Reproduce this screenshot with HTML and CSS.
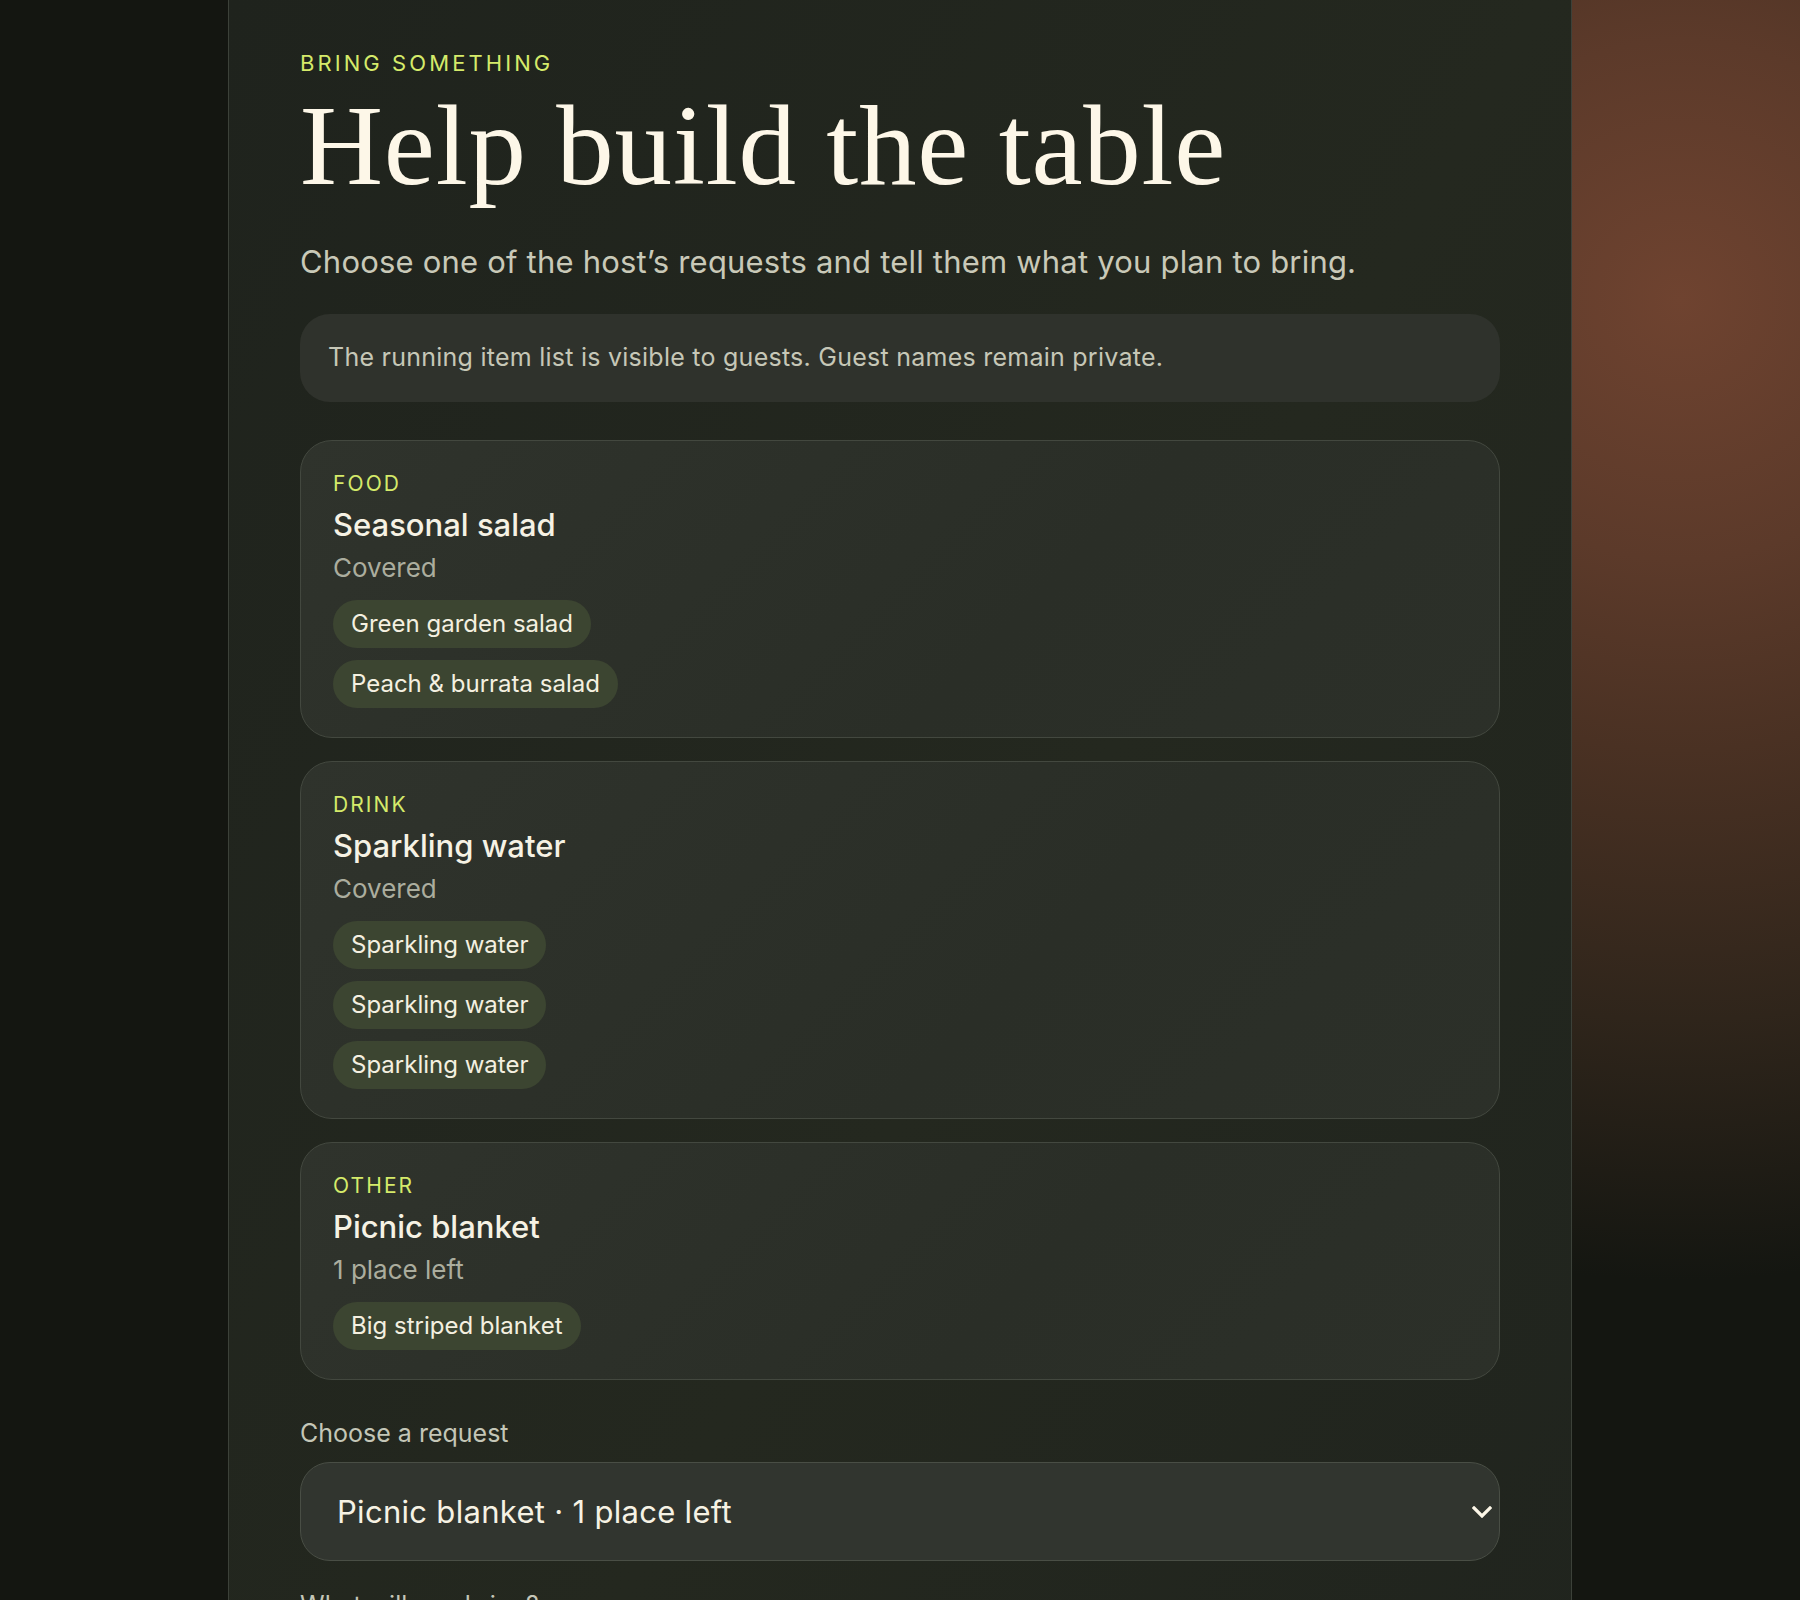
FILE: index.html
```html
<!DOCTYPE html>
<html lang="en">

<head>
    <meta charset="UTF-8">
    <meta name="viewport" content="width=device-width, initial-scale=1.0">
    <title>Bring something</title>
    <link rel="stylesheet" href="styles.css">
</head>

<body>
    <main class="sheet">
        <p class="eyebrow">Bring something</p>
        <h1 class="title">Help build the table</h1>
        <p class="lead">Choose one of the host’s requests and tell them what you plan to bring.</p>
        <div class="notice">The running item list is visible to guests. Guest names remain private.</div>

        <section class="requests">
            <article class="request">
                <span class="request-kind">Food</span>
                <h3 class="request-name">Seasonal salad</h3>
                <span class="request-status">Covered</span>
                <ul class="pledges">
                    <li class="pledge">Green garden salad</li>
                    <li class="pledge">Peach &amp; burrata salad</li>
                </ul>
            </article>
            <article class="request">
                <span class="request-kind">Drink</span>
                <h3 class="request-name">Sparkling water</h3>
                <span class="request-status">Covered</span>
                <ul class="pledges">
                    <li class="pledge">Sparkling water</li>
                    <li class="pledge">Sparkling water</li>
                    <li class="pledge">Sparkling water</li>
                </ul>
            </article>
            <article class="request">
                <span class="request-kind">Other</span>
                <h3 class="request-name">Picnic blanket</h3>
                <span class="request-status">1 place left</span>
                <ul class="pledges">
                    <li class="pledge">Big striped blanket</li>
                </ul>
            </article>
        </section>

        <form class="bring-form">
            <label class="field-label" for="request">Choose a request</label>
            <div class="select-wrap">
                <select id="request" class="field-select">
                    <option>Picnic blanket · 1 place left</option>
                    <option>Seasonal salad · Covered</option>
                    <option>Sparkling water · Covered</option>
                </select>
                <svg class="chevron" viewBox="0 0 20 12" width="20" height="12" aria-hidden="true">
                    <path d="M2 2l8 8 8-8" fill="none" stroke="currentColor" stroke-width="3.2" stroke-linecap="square"/>
                </svg>
            </div>
            <label class="field-label" for="item">What will you bring?</label>
            <input id="item" class="field-input" type="text" placeholder="e.g. Checked wool blanket">
        </form>
    </main>
</body>

</html>
```

FILE: styles.css
```css
html {
    background: radial-gradient(circle at 1680px 300px, #6f4330 0, #5c3a2a 260px, #4a3123 450px, #2f251b 720px, #141611 980px) #131611;
}

body {
    margin: 0;
    font-family: Inter, "Noto Sans", sans-serif;
    color: #f4f0e0;
}

.sheet {
    box-sizing: border-box;
    width: 1344px;
    min-height: 100vh;
    margin: 0 auto;
    padding: 49px 71px 80px;
    background: linear-gradient(120deg, #1f231d 0%, #24281f 55%, #20241e 100%);
    border-left: 1px solid #3c4139;
    border-right: 1px solid #3c4139;
}

.eyebrow {
    margin: 0;
    font-size: 22px;
    line-height: 1.3;
    letter-spacing: 0.14em;
    text-transform: uppercase;
    color: #d5ea6a;
}

.title {
    margin: 9px 0 0;
    font-family: "Liberation Serif", serif;
    font-weight: 400;
    font-size: 115px;
    line-height: 1.03;
    letter-spacing: 0.8px;
    color: #fdf7e8;
}

.lead {
    margin: 35px 0 0;
    font-size: 31px;
    line-height: 1.4;
    letter-spacing: 0.2px;
    color: #c9c9b8;
}

.notice {
    margin-top: 31px;
    padding: 25px 28px;
    border-radius: 30px;
    background: #2f322c;
    font-size: 25px;
    line-height: 1.5;
    letter-spacing: 0.25px;
    color: #c6c7b7;
}

.requests {
    display: flex;
    flex-direction: column;
    gap: 23px;
    margin-top: 38px;
}

.request {
    display: flex;
    flex-direction: column;
    align-items: flex-start;
    padding: 32px 32px 29px;
    border: 1px solid #43483f;
    border-radius: 32px;
    background: linear-gradient(135deg, #2f332c 0%, #2a2e27 60%, #2c3029 100%);
}

.request-kind {
    font-size: 21px;
    line-height: 1;
    letter-spacing: 0.1em;
    text-transform: uppercase;
    color: #d5ea6a;
}

.request-name {
    margin: 12px 0 0;
    font-size: 31px;
    font-weight: 500;
    line-height: 1.2;
    color: #f6f2e4;
}

.request-status {
    margin-top: 8px;
    font-size: 26px;
    line-height: 1.3;
    color: #abad9e;
}

.pledges {
    display: flex;
    flex-direction: column;
    align-items: flex-start;
    gap: 12px;
    margin: 15px 0 0;
    padding: 0;
    list-style: none;
}

.pledge {
    padding: 8px 18px;
    border-radius: 999px;
    background: #3c4531;
    font-size: 24px;
    line-height: 32px;
    color: #f4f0e0;
}

.bring-form {
    display: flex;
    flex-direction: column;
    margin-top: 37px;
}

.field-label {
    font-size: 25px;
    line-height: 1.3;
    color: #c4c6b7;
}

.select-wrap {
    position: relative;
    margin: 13px 0 28px;
}

.field-select {
    box-sizing: border-box;
    width: 100%;
    height: 99px;
    padding: 0 60px 0 36px;
    border: 1px solid #494e45;
    border-radius: 30px;
    background: #31352f;
    font-family: inherit;
    font-size: 31px;
    letter-spacing: 0.3px;
    color: #f6f2e4;
    appearance: none;
    -webkit-appearance: none;
}

.chevron {
    position: absolute;
    right: 8px;
    top: 44px;
    color: #fdf7e8;
    pointer-events: none;
}

.field-input {
    box-sizing: border-box;
    width: 100%;
    height: 99px;
    margin-top: 13px;
    padding: 0 36px;
    border: 1px solid #494e45;
    border-radius: 30px;
    background: #31352f;
    font-family: inherit;
    font-size: 29px;
    color: #f6f2e4;
}
```
